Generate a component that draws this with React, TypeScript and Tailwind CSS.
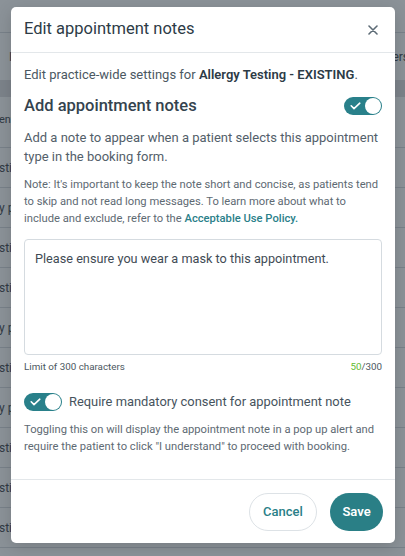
import React from "react";

const rows = ["sting", "y pa", "sting", "sting", "y pa", "sting", "y pa", "sting", "sting", "sting", "sting"];

function CheckIcon() {
  return (
    <svg width="11" height="8" viewBox="0 0 11 8" fill="none">
      <path d="M1.2 3.8L4 6.6L9.8 1.2" stroke="white" strokeWidth="1.6" strokeLinecap="round" strokeLinejoin="round" />
    </svg>
  );
}

function Toggle() {
  return (
    <div className="flex h-[18px] w-[38px] shrink-0 items-center justify-between rounded-full bg-[#29808a] pl-[6px] pr-[1px]">
      <CheckIcon />
      <span className="h-[16px] w-[16px] rounded-full bg-white" />
    </div>
  );
}

function BackgroundPage() {
  return (
    <div className="flex flex-col bg-white text-[12px] text-[#4a4f55]">
      <div className="h-[33px] border-b border-[#d9dde0]" />
      <div className="flex h-[47px] items-center justify-between">
        <span className="pl-[9px]">I</span>
        <span className="-mr-[4px]">ers</span>
      </div>
      <div className="h-[17px] bg-[#e0e1e2]" />
      <div className="flex h-[51px] items-center border-b border-[#d9dde0] pb-[4px]">
        <span className="-ml-[1px] text-[11px]">ent</span>
      </div>
      {rows.map((r, i) => (
        <div key={i} className="flex h-[40px] items-center border-b border-[#d9dde0]">
          <span className="-ml-[1px]">{r}</span>
        </div>
      ))}
    </div>
  );
}

export default function App() {
  return (
    <div className="relative h-[556px] w-[405px] overflow-hidden font-['Roboto',sans-serif]">
      <BackgroundPage />
      <div className="absolute inset-0 bg-[rgba(24,38,50,0.5)]" />

      <div className="absolute left-[11px] top-[7px] w-[384px] rounded-[5px] bg-white shadow-[0_4px_16px_rgba(0,0,0,0.15)]">
        <div className="flex h-[46px] items-center justify-between border-b border-[#e3e7ea] pl-[13px] pr-[12px]">
          <h2 className="text-[16.5px] text-[#2d3b46]">Edit appointment notes</h2>
          <button className="flex h-5 w-5 items-center justify-center">
            <svg width="10" height="10" viewBox="0 0 10 10" fill="none">
              <path d="M1 1L9 9M9 1L1 9" stroke="#5d6b76" strokeWidth="1.6" strokeLinecap="round" />
            </svg>
          </button>
        </div>

        <div className="px-[13px] pt-[12px] pb-[24px]">
          <p className="text-[13px] leading-[20px] text-[#4b5862]">
            Edit practice-wide settings for{" "}
            <span className="font-semibold text-[#2d3b46]">Allergy Testing - EXISTING</span>.
          </p>

          <div className="mt-[10px] flex h-[22px] items-center justify-between">
            <h3 className="text-[16.5px] font-medium text-[#34434e]">Add appointment notes</h3>
            <Toggle />
          </div>

          <p className="mt-[11px] text-[13px] leading-[19px] text-[#53606a]">
            Add a note to appear when a patient selects this appointment type in the booking form.
          </p>

          <p className="mt-[10px] text-[11.2px] leading-[17px] text-[#5e6a73]">
            Note: It's important to keep the note short and concise, as patients tend to skip and not read long
            messages. To learn more about what to include and exclude, refer to the{" "}
            <span className="font-medium text-[#2a8089]">Acceptable Use Policy.</span>
          </p>

          <textarea
            defaultValue="Please ensure you wear a mask to this appointment."
            className="mt-[12px] block h-[116px] w-full resize-none rounded-[4px] border border-[#d5dbe0] px-[10px] pt-[9px] text-[12.7px] leading-[20px] text-[#3f4b55] outline-none"
          />

          <div className="mt-[4px] flex justify-between text-[9.8px] leading-[16px] text-[#4c5761]">
            <span>Limit of 300 characters</span>
            <span>
              <span className="text-[#62b92f]">50</span>/300
            </span>
          </div>

          <div className="mt-[17px] flex h-[20px] items-center gap-[7px]">
            <Toggle />
            <span className="text-[12.9px] text-[#46535d]">Require mandatory consent for appointment note</span>
          </div>

          <p className="mt-[9px] text-[11.2px] leading-[17px] text-[#5e6a73]">
            Toggling this on will display the appointment note in a pop up alert and require the patient to click "I
            understand" to proceed with booking.
          </p>
        </div>

        <div className="flex justify-end gap-[13px] border-t border-[#e3e7ea] px-[12px] pt-[13px] pb-[12px]">
          <button className="h-[38px] w-[68px] rounded-full border border-[#dde2e6] text-[13px] font-medium text-[#2a7f88]">
            Cancel
          </button>
          <button className="h-[38px] w-[53px] rounded-full bg-[#2a7f86] text-[13px] font-semibold text-white">
            Save
          </button>
        </div>
      </div>
    </div>
  );
}
